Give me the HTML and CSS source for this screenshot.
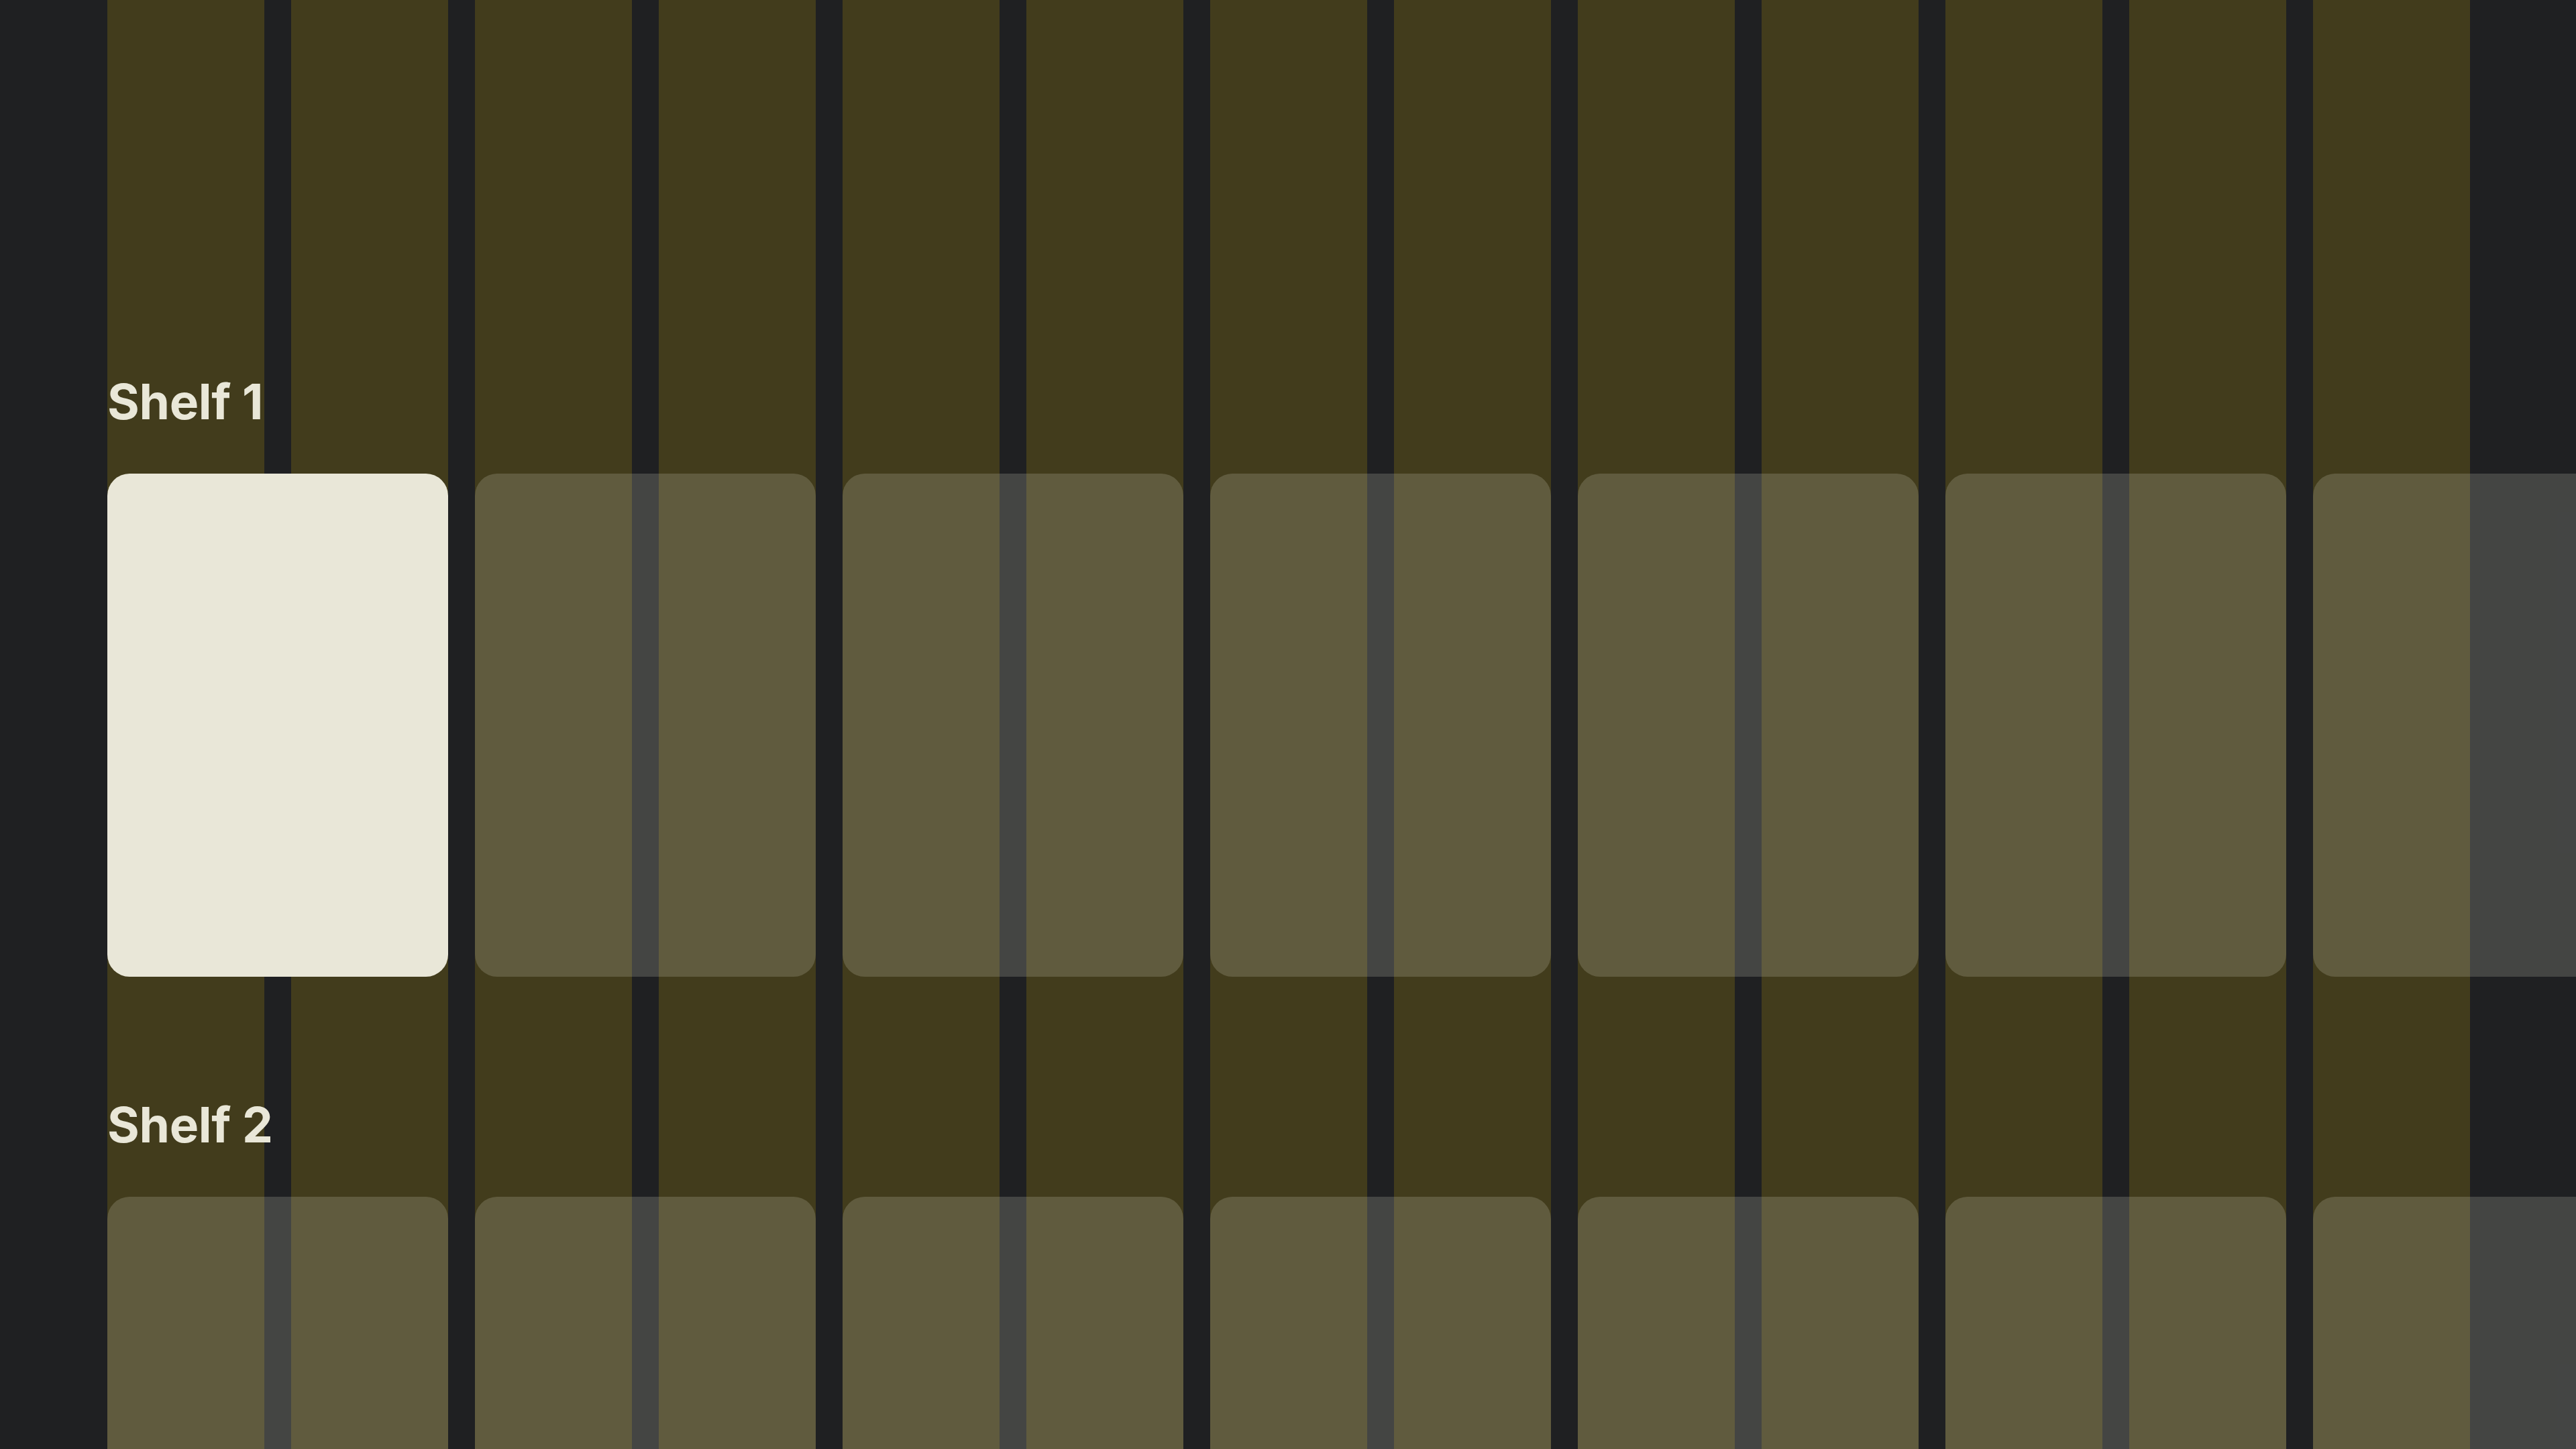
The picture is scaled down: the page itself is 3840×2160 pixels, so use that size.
FILE: index.html
```html
<!DOCTYPE html>
<html lang="en">
<head>
<meta charset="utf-8">
<title>Shelves</title>
<link rel="stylesheet" href="styles.css">
</head>
<body>
  <div class="layout-grid" aria-hidden="true">
    <span></span><span></span><span></span><span></span><span></span>
    <span></span><span></span><span></span><span></span><span></span>
    <span></span><span></span><span></span>
  </div>

  <main class="screen">
    <section class="shelf">
      <h2 class="shelf-title">Shelf 1</h2>
      <div class="shelf-row">
        <div class="tile is-focused"></div>
        <div class="tile"></div>
        <div class="tile"></div>
        <div class="tile"></div>
        <div class="tile"></div>
        <div class="tile"></div>
        <div class="tile"></div>
        <div class="tile"></div>
      </div>
    </section>

    <section class="shelf">
      <h2 class="shelf-title">Shelf 2</h2>
      <div class="shelf-row">
        <div class="tile"></div>
        <div class="tile"></div>
        <div class="tile"></div>
        <div class="tile"></div>
        <div class="tile"></div>
        <div class="tile"></div>
        <div class="tile"></div>
        <div class="tile"></div>
      </div>
    </section>
  </main>
</body>
</html>
```

FILE: styles.css
```css
* {
  box-sizing: border-box;
}

html,
body {
  margin: 0;
  padding: 0;
}

body {
  position: relative;
  width: 3840px;
  height: 2160px;
  overflow: hidden;
  background: #1f2022;
  font-family: Inter, "Noto Sans", "Liberation Sans", sans-serif;
  color: #e9e7d8;
}

/* 13-column layout guide drawn beneath the content */
.layout-grid {
  position: absolute;
  inset: 0;
  z-index: 0;
  display: grid;
  grid-template-columns: repeat(13, 1fr);
  column-gap: 40px;
  padding: 0 158px 0 160px;
  pointer-events: none;
}

.layout-grid span {
  background: #423c1c;
}

/* the screen clips the shelves that continue off to the right and below */
.screen {
  position: relative;
  z-index: 1;
  height: 2160px;
  overflow: hidden;
  display: flex;
  flex-direction: column;
  gap: 177px;
  padding: 555px 0 0 160px;
}

.shelf {
  display: flex;
  flex-direction: column;
  gap: 63px;
  flex-shrink: 0;
}

.shelf-title {
  margin: 0;
  font-size: 73px;
  line-height: 88px;
  font-weight: 700;
  letter-spacing: -0.3px;
  color: #e9e7d8;
}

.shelf-row {
  display: flex;
  gap: 40px;
  overflow: hidden;
}

.tile {
  flex: 0 0 508px;
  height: 750px;
  border-radius: 33px;
  background: rgba(233, 231, 216, 0.185);
}

.tile.is-focused {
  background: #e9e7d8;
}
```
